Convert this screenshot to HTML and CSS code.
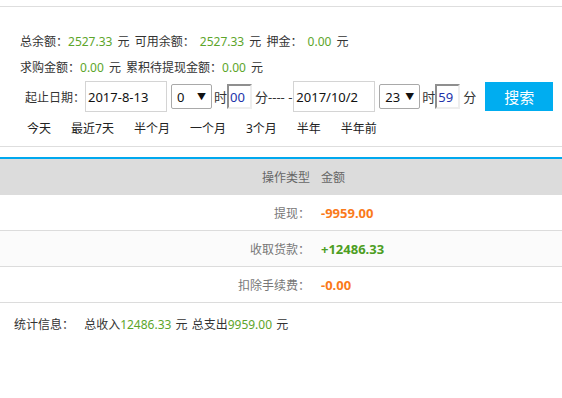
FILE: index.html
```html
<!DOCTYPE html>
<html lang="zh-CN">
<head>
    <meta charset="UTF-8">
    <meta name="viewport" content="width=device-width, initial-scale=1.0">
    <title>资金明细</title>
    <link rel="stylesheet" href="styles.css">
</head>
<body>

    <div class="panel">
        <div class="summary">
            <p>总余额：<span class="num">2527.33</span> 元 可用余额： <span class="num">2527.33</span> 元 押金： <span class="num">0.00</span> 元</p>
            <p>求购金额：<span class="num">0.00</span> 元 累积待提现金额：<span class="num">0.00</span> 元</p>
        </div>

        <form class="search-row" onsubmit="return false">
            <label class="label">起止日期：</label>
            <input class="date-input" type="text" value="2017-8-13">
            <span class="select-box">
                <select class="hour">
                    <option>0</option>
                </select>
            </span>
            <span class="unit">时</span>
            <input class="minute" type="text" value="00">
            <span class="unit">分---- -</span>
            <input class="date-input" type="text" value="2017/10/2">
            <span class="select-box">
                <select class="hour">
                    <option>23</option>
                </select>
            </span>
            <span class="unit">时</span>
            <input class="minute" type="text" value="59">
            <span class="unit unit-last">分</span>
            <button class="btn-search" type="submit">搜索</button>
        </form>

        <div class="quick">
            <a href="#">今天</a>
            <a href="#">最近7天</a>
            <a href="#">半个月</a>
            <a href="#">一个月</a>
            <a href="#">3个月</a>
            <a href="#">半年</a>
            <a href="#">半年前</a>
        </div>
    </div>

    <table class="records">
        <thead>
            <tr>
                <th class="col-type">操作类型</th>
                <th class="col-amount">金额</th>
            </tr>
        </thead>
        <tbody>
            <tr>
                <td class="col-type">提现：</td>
                <td class="col-amount out">-9959.00</td>
            </tr>
            <tr class="alt">
                <td class="col-type">收取货款：</td>
                <td class="col-amount in">+12486.33</td>
            </tr>
            <tr>
                <td class="col-type">扣除手续费：</td>
                <td class="col-amount out">-0.00</td>
            </tr>
        </tbody>
    </table>

    <div class="stats">
        <span class="stats-title">统计信息：</span>
        总收入<span class="num">12486.33</span> 元 总支出<span class="num">9959.00</span> 元
    </div>

</body>
</html>
```

FILE: styles.css
```css
body {
    margin: 0;
    font-family: "Noto Sans", "Noto Sans CJK SC", sans-serif;
    font-size: 12px;
    color: #333;
    background: #fff;
}
.panel {
    margin-top: 6px;
    border-top: 1px solid #dedede;
    border-bottom: 1px solid #dedede;
    padding-bottom: 4px;
}
.summary {
    padding: 22px 20px 0;
}
.summary p {
    margin: 0;
    line-height: 26px;
    white-space: nowrap;
    word-spacing: 2px;
}
.num {
    color: #5da52b;
}

/* строка поиска */
.search-row {
    display: flex;
    align-items: center;
    height: 31px;
    padding-left: 25px;
    white-space: nowrap;
}
.label {
    width: 60px;
}
.date-input {
    box-sizing: border-box;
    width: 82px;
    height: 31px;
    margin: 0;
    padding: 0 2px;
    border: 1px solid #d4d4d4;
    font-family: inherit;
    font-size: 13px;
    color: #111;
    outline: none;
}
.select-box {
    position: relative;
    margin-left: 4px;
}
.select-box::after {
    content: "▼";
    position: absolute;
    right: 6px;
    top: 6px;
    font-size: 9px;
    color: #111;
    pointer-events: none;
}
.hour {
    box-sizing: border-box;
    width: 41px;
    height: 25px;
    margin: 0;
    padding: 0 0 0 5px;
    border: 1px solid #a9a9a9;
    border-radius: 2px;
    background: #fff;
    font-family: inherit;
    font-size: 13px;
    color: #111;
    -webkit-appearance: none;
    appearance: none;
}
.unit {
    margin-left: 2px;
    font-size: 13px;
}
.unit-last {
    margin-left: 3px;
}
.minute {
    box-sizing: border-box;
    width: 25px;
    height: 25px;
    margin: 0;
    padding: 0 0 0 1px;
    border: 2px solid #eee;
    border-top-color: #8f8f8f;
    border-left-color: #8f8f8f;
    font-family: inherit;
    font-size: 13px;
    color: #2233aa;
    outline: none;
}
.minute + .unit {
    margin-left: 3px;
    margin-right: 1px;
}
.btn-search {
    width: 68px;
    height: 29px;
    margin-left: 8px;
    padding: 0;
    border: none;
    background: #00adf0;
    color: #fff;
    font-family: inherit;
    font-size: 15px;
    cursor: pointer;
}

.quick {
    margin-top: 4px;
    padding-left: 27px;
    line-height: 26px;
    display: flex;
    gap: 20px;
}
.quick a {
    color: #222;
    text-decoration: none;
}

/* таблица */
.records {
    width: 100%;
    margin-top: 10px;
    border-collapse: collapse;
    border-top: 2px solid #00a8ee;
}
.records th {
    height: 36px;
    padding: 0;
    background: #dcdcdc;
    font-weight: normal;
    color: #666;
}
.records td {
    height: 35px;
    padding: 0;
    border-bottom: 1px solid #dcdcdc;
    color: #777;
}
.records .alt td {
    background: #fbfbfb;
}
.col-type {
    width: 310px;
    padding-right: 5px !important;
    text-align: right;
}
.col-amount {
    padding-left: 6px !important;
    text-align: left;
}
.records td.out {
    color: #fa7a1a;
    font-weight: bold;
    font-size: 13px;
}
.records td.in {
    color: #4d9e23;
    font-weight: bold;
    font-size: 13px;
}

.stats {
    margin-top: 9px;
    padding-left: 14px;
    line-height: 26px;
    word-spacing: 1px;
}
.stats-title {
    margin-right: 6px;
}
```
